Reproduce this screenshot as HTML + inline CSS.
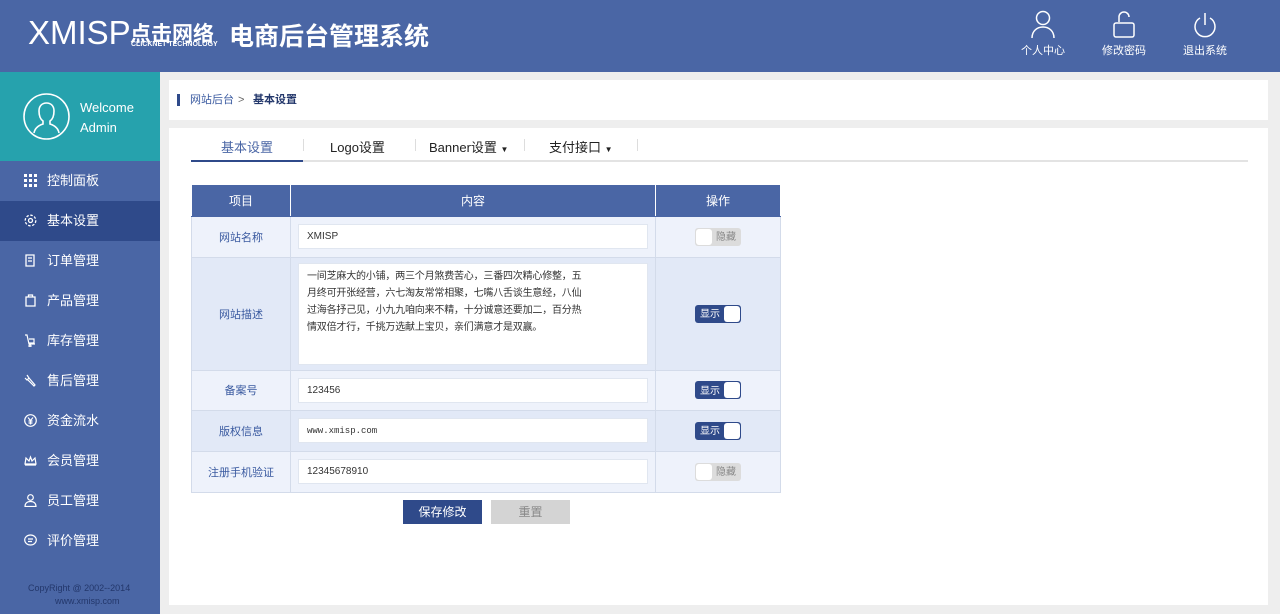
<!DOCTYPE html>
<html><head><meta charset="utf-8"><style>
*{margin:0;padding:0;box-sizing:border-box}
body{width:1280px;height:614px;overflow:hidden;background:#eeeeee;font-family:"Liberation Sans","Noto Sans CJK SC",sans-serif;font-size:12px;color:#333;position:relative}
.hdr{position:absolute;left:0;top:0;width:1280px;height:72px;background:#4a66a5;color:#fff}
.logo{position:absolute;left:28px;top:14px;font-size:33px;letter-spacing:0px}
.logocn{position:absolute;left:130px;top:18px;font-size:21px;font-weight:bold}
.logoen{position:absolute;left:131px;top:41px;font-size:7px;font-weight:bold}
.title{position:absolute;left:229px;top:17px;font-size:25px;font-weight:bold}
.hi{position:absolute;top:10px;width:60px;text-align:center;font-size:11px}
.hi svg{display:block;margin:0 auto 4px}
.side{position:absolute;left:0;top:72px;width:160px;height:542px;background:#4a66a5}
.wel{height:89px;background:#26a2ad;position:relative;color:#fff}
.wel .t{position:absolute;left:80px;top:26px;font-size:13px;line-height:20px}
.mi{height:40px;line-height:40px;color:#fff;font-size:13px;padding-left:47px;position:relative}
.mi.on{background:#2f4a8a}
.mi svg{position:absolute;left:24px;top:13px}
.copy{position:absolute;left:0;width:160px;top:510px;font-size:9px;color:#23376b;line-height:13px}
.bc{position:absolute;left:169px;top:80px;width:1099px;height:40px;background:#fff;font-size:11px}
.bc span{position:absolute;top:0;line-height:40px}
.main{position:absolute;left:169px;top:128px;width:1099px;height:477px;background:#fff}
.tabs{position:absolute;left:22px;top:0;width:1057px;height:34px;border-bottom:2px solid #e3e3e3}
.tab{position:absolute;top:9px;font-size:13px;color:#222}
.sep{position:absolute;top:11px;width:1px;height:12px;background:#ddd}
table{position:absolute;left:22px;top:57px;border-collapse:collapse;width:590px}
td,th{border:1px solid #d3dbea;text-align:center;font-weight:normal}
th{background:#4a66a5;color:#fff;height:31px;border-color:#fff #fff #4a66a5 #fff;border-top:none;font-size:12px}
td{color:#3a5aa0;font-size:11px}
tr.a td{background:#eef2fb}tr.b td{background:#e2e9f7}
.in{margin:0 7px;background:#fff;border:1px solid #e0e6f0;height:25px;text-align:left;padding-left:8px;line-height:24px;color:#333;font-size:10px}
.tg{display:inline-flex;width:46px;height:18px;border-radius:3px;position:relative;vertical-align:middle;font-size:10px;align-items:center}
.tg.off{background:#dcdcdc;color:#888;justify-content:flex-end}
.tg.off i{position:absolute;left:1px;top:1px;width:16px;height:16px;background:#fff;border-radius:3px}
.tg.off span{margin-right:5px;line-height:1;padding-top:3px}
.tg.on{background:#2f4a8a;color:#fff}
.tg.on i{position:absolute;right:1px;top:1px;width:16px;height:16px;background:#fff;border-radius:3px}
.tg.on span{margin-left:5px;line-height:1;padding-top:3px}
.btn{position:absolute;top:372px;width:79px;height:24px;line-height:24px;text-align:center;color:#fff;font-size:12px}
</style></head><body>
<div class="hdr">
<div class="logo">XMISP</div><div class="logocn">点击网络</div><div class="logoen">CLICKNET TECHNOLOGY</div>
<div class="title">电商后台管理系统</div>
<div class="hi" style="left:1013px"><svg width="24" height="28" viewBox="0 0 24 28" fill="none" stroke="#fff" stroke-width="1.5"><circle cx="12" cy="8" r="6.5"/><path d="M1 28c0-7 5-11 11-11s11 4 11 11"/></svg>个人中心</div>
<div class="hi" style="left:1094px"><svg width="24" height="28" viewBox="0 0 24 28" fill="none" stroke="#fff" stroke-width="1.5"><path d="M7 12V7a5 5 0 0 1 10 0"/><rect x="2" y="13" width="20" height="14" rx="2"/></svg>修改密码</div>
<div class="hi" style="left:1175px"><svg width="24" height="28" viewBox="0 0 24 28" fill="none" stroke="#fff" stroke-width="1.5"><path d="M7 8a10 10 0 1 0 10 0"/><path d="M12 3v12"/></svg>退出系统</div>
</div>
<div class="side">
<div class="wel"><svg style="position:absolute;left:23px;top:21px" width="47" height="47" viewBox="0 0 47 47" fill="none" stroke="#fff" stroke-width="1.6"><circle cx="23.5" cy="23.5" r="22.5"/><path d="M11 40c1-6 6-8 9-9v-3c-3-2-4-6-4-10 0-5 3-8 7.5-8s7.5 3 7.5 8c0 4-1 8-4 10v3c3 1 8 3 9 9"/></svg><div class="t">Welcome<br>Admin</div></div>
<div class="mi"><svg width="13" height="13" viewBox="0 0 13 13" fill="#fff"><rect x="0" y="0" width="3" height="3"/><rect x="5" y="0" width="3" height="3"/><rect x="10" y="0" width="3" height="3"/><rect x="0" y="5" width="3" height="3"/><rect x="5" y="5" width="3" height="3"/><rect x="10" y="5" width="3" height="3"/><rect x="0" y="10" width="3" height="3"/><rect x="5" y="10" width="3" height="3"/><rect x="10" y="10" width="3" height="3"/></svg>控制面板</div>
<div class="mi on"><svg width="13" height="13" viewBox="0 0 13 13" fill="none" stroke="#fff" stroke-width="1.3"><circle cx="6.5" cy="6.5" r="2"/><circle cx="6.5" cy="6.5" r="5.3" stroke-dasharray="2.5 1.6"/></svg>基本设置</div>
<div class="mi"><svg width="13" height="13" viewBox="0 0 13 13" fill="none" stroke="#fff" stroke-width="1.3"><path d="M2 1h8v11H2z M4 4h4M4 7h4"/></svg>订单管理</div>
<div class="mi"><svg width="13" height="13" viewBox="0 0 13 13" fill="none" stroke="#fff" stroke-width="1.3"><path d="M2 3h9v9H2z M4.5 3V1h4v2"/></svg>产品管理</div>
<div class="mi"><svg width="13" height="13" viewBox="0 0 13 13" fill="none" stroke="#fff" stroke-width="1.2"><path d="M1 1h2l2 9h6M5 5h5v4H5"/><circle cx="6" cy="12" r="1"/></svg>库存管理</div>
<div class="mi"><svg width="13" height="13" viewBox="0 0 13 13" fill="none" stroke="#fff" stroke-width="1.2"><path d="M3 1l2 3-2 2-2-2M5 4l6 7-1 1-6-6"/></svg>售后管理</div>
<div class="mi"><svg width="13" height="13" viewBox="0 0 13 13" fill="none" stroke="#fff" stroke-width="1.2"><circle cx="6.5" cy="6.5" r="5.8"/><path d="M4 3.5l2.5 3 2.5-3M6.5 6.5v4M4.5 7h4M4.5 9h4"/></svg>资金流水</div>
<div class="mi"><svg width="13" height="13" viewBox="0 0 13 13" fill="none" stroke="#fff" stroke-width="1.2"><path d="M1 11h11M1 10l1-6 3 3 1.5-4 1.5 4 3-3 1 6z"/></svg>会员管理</div>
<div class="mi"><svg width="13" height="13" viewBox="0 0 13 13" fill="none" stroke="#fff" stroke-width="1.2"><circle cx="6.5" cy="3.5" r="2.8"/><path d="M1 12.5c0-3 2-5 5.5-5s5.5 2 5.5 5z"/></svg>员工管理</div>
<div class="mi"><svg width="13" height="13" viewBox="0 0 13 13" fill="none" stroke="#fff" stroke-width="1.2"><ellipse cx="6.5" cy="6" rx="5.8" ry="5"/><path d="M4 5h5M4 7.5h4"/></svg>评价管理</div>
<div class="copy"><div style="padding-left:28px">CopyRight @ 2002--2014</div><div style="padding-left:55px">www.xmisp.com</div></div>
</div>
<div class="bc"><div style="position:absolute;left:8px;top:14px;width:3px;height:12px;background:#2f4a8a"></div><span style="left:21px;color:#3a5aa0">网站后台</span><span style="left:69px;color:#666">&gt;</span><span style="left:84px;color:#23376b;font-weight:bold">基本设置</span></div>
<div class="main">
<div class="tabs">
<div style="position:absolute;left:0;top:32px;width:112px;height:2px;background:#2f4a8a"></div>
<div class="tab" style="left:30px;color:#4a66a5">基本设置</div><div class="sep" style="left:112px"></div>
<div class="tab" style="left:139px">Logo设置</div><div class="sep" style="left:224px"></div>
<div class="tab" style="left:238px">Banner设置 <span style="font-size:8px">▼</span></div><div class="sep" style="left:333px"></div>
<div class="tab" style="left:358px">支付接口 <span style="font-size:8px">▼</span></div><div class="sep" style="left:446px"></div>
</div>
<table>
<tr><th style="width:99px">项目</th><th style="width:365px">内容</th><th>操作</th></tr>
<tr class="a" style="height:41px"><td>网站名称</td><td><div class="in">XMISP</div></td><td><span class="tg off"><i></i><span>隐藏</span></span></td></tr>
<tr class="b" style="height:113px"><td>网站描述</td><td><div class="in" style="height:102px;line-height:17px;padding-top:4px;white-space:nowrap;font-size:10px;letter-spacing:-0.2px">一间芝麻大的小铺，两三个月煞费苦心，三番四次精心修整，五<br>月终可开张经营，六七淘友常常相聚，七嘴八舌谈生意经，八仙<br>过海各抒己见，小九九咱向来不精，十分诚意还要加二，百分热<br>情双倍才行，千挑万选献上宝贝，亲们满意才是双赢。</div></td><td><span class="tg on"><span>显示</span><i></i></span></td></tr>
<tr class="a" style="height:40px"><td>备案号</td><td><div class="in">123456</div></td><td><span class="tg on"><span>显示</span><i></i></span></td></tr>
<tr class="b" style="height:41px"><td>版权信息</td><td><div class="in" style="font-family:'Liberation Mono',monospace;font-size:9px">www.xmisp.com</div></td><td><span class="tg on"><span>显示</span><i></i></span></td></tr>
<tr class="a" style="height:41px"><td>注册手机验证</td><td><div class="in">12345678910</div></td><td><span class="tg off"><i></i><span>隐藏</span></span></td></tr>
</table>
<div class="btn" style="left:234px;background:#2f4a8a">保存修改</div>
<div class="btn" style="left:322px;background:#d4d4d4;color:#888">重置</div>
</div>
</body></html>
